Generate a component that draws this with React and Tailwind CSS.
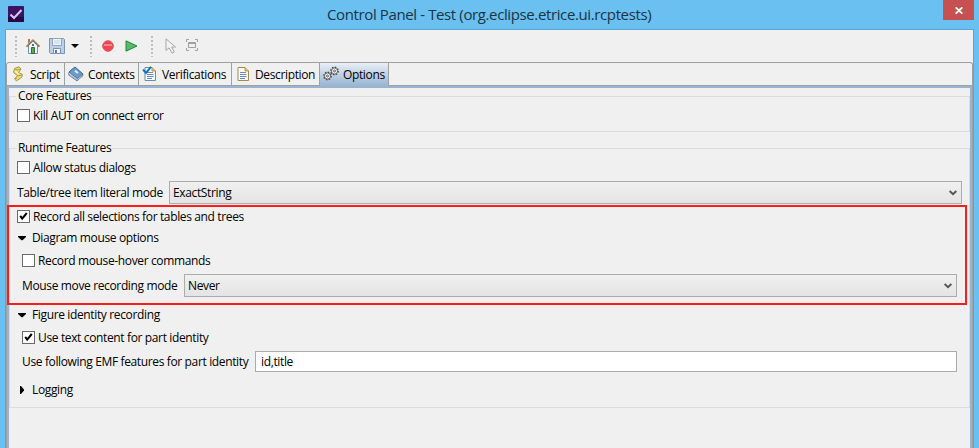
import React from "react";

const Label = ({ w, className = "", children }) => (
  <span className={"flex whitespace-pre leading-4 " + w + " " + className}>{children}</span>
);

function Check({ checked }) {
  return (
    <span className="block h-[13px] w-[13px] shrink-0 border border-[#6b6b6b] bg-white">
      {checked && (
        <svg viewBox="0 0 11 11" className="block h-[11px] w-[11px]" aria-hidden="true">
          <path d="M2.2 4.8L4.2 7.6L8.8 2" fill="none" stroke="#000" strokeWidth="2" />
        </svg>
      )}
    </span>
  );
}

function Option({ checked, w, className = "", children }) {
  return (
    <div className={"flex h-[13px] items-center gap-[3px] " + className}>
      <Check checked={checked} />
      <Label w={w}>{children}</Label>
    </div>
  );
}

function Twisty({ open }) {
  return (
    <svg viewBox="0 0 10 10" className="block h-[10px] w-[10px] shrink-0" aria-hidden="true">
      <path d={open ? "M1 3H9V4L5.5 7.2H4.5L1 4Z" : "M3 1H4L7 4.5V5.5L4 9H3Z"} fill="#000" />
    </svg>
  );
}

function Section({ open, w, className = "", children }) {
  return (
    <div className={"flex h-4 items-center gap-[5px] pl-[7px] " + className}>
      <Twisty open={open} />
      <Label w={w}>{children}</Label>
    </div>
  );
}

function Combo({ children, w }) {
  return (
    <div className="flex h-[23px] flex-1 items-center justify-between border border-[#acacac] bg-linear-to-b from-[#f0f0f0] to-[#e4e4e4] pr-1 pl-[3px]">
      <Label w={w}>{children}</Label>
      <svg viewBox="0 0 8 6" className="h-[6px] w-2" aria-hidden="true">
        <path d="M0.6 1L4 4.2L7.4 1" fill="none" stroke="#555" strokeWidth="2" />
      </svg>
    </div>
  );
}

function Group({ title, titleW, className = "", children }) {
  return (
    <fieldset className={"mr-0 min-w-0 border border-[#dcdcdc] " + className}>
      <legend className="ml-[6px] h-4 px-[2px]">
        <Label w={titleW}>{title}</Label>
      </legend>
      {children}
    </fieldset>
  );
}

const Grip = () => (
  <svg viewBox="0 0 2 21" className="h-[21px] w-[2px]" aria-hidden="true">
    <path d="M1 0V21" stroke="#bdbdbd" strokeWidth="2" strokeDasharray="2 2" />
  </svg>
);

const Home = () => (
  <svg viewBox="0 0 16 16" className="block h-4 w-4">
    <path d="M3.5 7V15.5H12.5V7L8 2.5Z" fill="#eef5fa" stroke="#6d93b8" />
    <path d="M4 1V6" stroke="#a87b58" strokeWidth="2" />
    <path d="M1.5 8.7L8 2.2L14.5 8.7" fill="none" stroke="#8b6d4a" strokeWidth="1.8" />
    <path d="M1.3 8L8 1.4L14.7 8" fill="none" stroke="#ecd9b4" strokeWidth=".8" strokeDasharray="1.3 .8" />
    <path d="M7 6H9V8H7Z" fill="#3e75a8" />
    <path d="M6.5 9.5H9.5V15.5H6.5Z" fill="#67a84d" stroke="#2d6c48" />
  </svg>
);

const Save = () => (
  <svg viewBox="0 0 16 16" className="block h-4 w-4">
    <path d="M.5 .5H14.5L15.5 1.5V15.5H1.5L.5 14.5Z" fill="#bccfe3" stroke="#7b94b6" />
    <path d="M3.5 .5H12.5V7.5H3.5Z" fill="#edf5fb" stroke="#8ba6c4" />
    <path d="M5 3H11M5 5H11" stroke="#c3d3e2" />
    <path d="M4.5 10.5H11.5V15.5H4.5Z" fill="#f6fafc" stroke="#7b94b6" />
    <path d="M6 12H8V15H6Z" fill="#5c7ea8" />
  </svg>
);

const Script = () => (
  <svg viewBox="0 0 16 16" className="block h-4 w-4">
    <path d="M3.5 2.5L8 .8L10 3L7.5 6.5L11.5 8.5L10.5 11.5L5.5 14.8L3.5 13L6.5 9.5L2.5 6.5Z" fill="#f1de72" stroke="#a8934a" />
    <path d="M4 3L6 4L9.5 3M6.5 10L11 9M4 13L6 12" fill="none" stroke="#b59a43" />
    <path d="M4.5 5.5L8 8" stroke="#fffbd0" />
  </svg>
);

const Book = () => (
  <svg viewBox="0 0 16 16" className="block h-4 w-4">
    <path d="M1 6L7 1L15.3 9L9 15L.7 9Z" fill="#f4f7fa" stroke="#6482a2" />
    <path d="M1 6L7 1L15 8L9.3 12.5Z" fill="#6c9bcc" stroke="#40709f" />
    <path d="M1 8L9 14L15 10M2 7L9 13" fill="none" stroke="#8199af" strokeWidth=".8" />
    <path d="M7 4.8L10 7" stroke="#e4f0fb" strokeWidth="2" />
  </svg>
);

const Lines = ({ check }) => (
  <svg viewBox="0 0 16 16" className="block h-4 w-4">
    <path d="M3 1.5H10L13.5 5V14.5H3Z" fill="#fafdff" stroke={check ? "#7289a5" : "#a58b46"} />
    <path d="M10 1.5V5H13.5" fill="#e8c06a" stroke="#bf9243" />
    <path d="M5 6.5H11M5 8.5H11.5M5 10.5H11.5M5 12.5H10" stroke="#6b8ac4" />
    {check && <path d="M1 3.5L4 7L9 .8" fill="none" stroke="#1477c5" strokeWidth="2" />}
  </svg>
);

const Gears = () => (
  <svg viewBox="0 0 16 16" className="block h-4 w-4">
    {[[4.5, 10], [11.5, 5]].map(([x, y]) => (
      <g key={x} fill="none" stroke="#4c4c4c">
        <circle cx={x} cy={y} r="3.6" strokeWidth="1.6" strokeDasharray="1.5 1.3" />
        <circle cx={x} cy={y} r="3" fill="#fafafa" strokeWidth=".8" />
        <circle cx={x} cy={y} r="1" fill="#fff" strokeWidth=".9" />
      </g>
    ))}
  </svg>
);

const tabs = [
  ["Script", "w-[58px]", "w-[30px]", <Script key="i" />, "pl-[4px] gap-[3px]"],
  ["Contexts", "w-[74px]", "w-[46px]", <Book key="i" />, "pl-[3px] gap-[4px]"],
  ["Verifications", "w-[93px]", "w-[66px]", <Lines key="i" check />, "pl-[3px] gap-[4px]"],
  ["Description", "w-[88px]", "w-[60px]", <Lines key="i" />, "pl-[3px] gap-[4px]"],
  ["Options", "w-[69px]", "w-[42px]", <Gears key="i" />, "pl-[3px] gap-[4px]"],
];

export default function App() {
  return (
    <div className="relative flex h-[448px] w-[979px] flex-col overflow-hidden bg-[#69c0f1] font-['Open_Sans','Noto_Sans',sans-serif] text-[12px] tracking-[-0.36px] text-black">
      <header className="flex h-[29px] shrink-0 items-start">
        <svg viewBox="0 0 16 16" className="mt-[6px] ml-2 h-4 w-4">
          <rect width="16" height="16" rx="1" fill="#3c1263" />
          <path d="M0 11H16V16H0Z" fill="#260a43" />
          <path d="M2.5 8.5L6 12L13.5 4" fill="none" stroke="#d9c4f4" strokeWidth="2" />
        </svg>
        <h1 className="ml-[303px] flex-1 pt-[4px] text-[15px] leading-5 tracking-[-0.38px] whitespace-pre text-[#1c3442]">
          Control Panel - Test (org.eclipse.etrice.ui.rcptests)
        </h1>
        <button className="mr-[5px] flex h-5 w-[31px] items-center justify-center bg-[#c75050]" aria-label="Close">
          <svg viewBox="0 0 8 7" className="mt-px h-[7px] w-2">
            <path d="M.7 .3L7.3 6.7M7.3 .3L.7 6.7" stroke="#fff" strokeWidth="1.8" />
          </svg>
        </button>
      </header>
      <main className="mx-[5px] flex flex-1 flex-col border-x border-t border-[#5ba5d0] bg-[#f0f0f0]">
        <div className="flex h-8 shrink-0 items-center pl-[9px]">
          <Grip />
          <div className="ml-[8px]"><Home /></div>
          <div className="ml-2"><Save /></div>
          <svg viewBox="0 0 8 4" className="ml-[6px] h-1 w-2"><path d="M0 0H8L4 4Z" /></svg>
          <div className="ml-[11px]"><Grip /></div>
          <svg viewBox="0 0 12 12" className="ml-[10px] h-3 w-3">
            <circle cx="6" cy="6" r="5.3" fill="#ef4651" stroke="#d85660" />
            <path d="M2 5H10" stroke="#f9858a" strokeWidth="2" />
          </svg>
          <svg viewBox="0 0 13 12" className="ml-[11px] h-3 w-[13px]">
            <path d="M1 .8V11.2L12 6Z" fill="#59b96a" stroke="#21853a" />
          </svg>
          <div className="ml-[13px]"><Grip /></div>
          <svg viewBox="0 0 12 16" className="ml-[12px] h-4 w-3">
            <path d="M1 .8V12.5L4 9.8L7 15.2L9.3 14L6.6 9H10.5Z" fill="#f3f3f3" stroke="#a5a5a5" />
          </svg>
          <svg viewBox="0 0 12 12" className="mb-[2px] ml-[9px] h-3 w-3" fill="none" stroke="#a0a0a0">
            <path d="M.5 3V.5H3M9 .5H11.5V3M11.5 9V11.5H9M3 11.5H.5V9M2.5 3.5H9.5V8.5H2.5ZM2.5 4.5H9.5" />
          </svg>
        </div>
        <div className="flex flex-1 flex-col rounded-t-[3px] border-x border-t border-[#a0a0a0]">
          <nav className="flex h-[23px] shrink-0 border-b border-[#a0a0a0]">
            {tabs.map(([name, width, w, icon, pad]) => (
              <div
                key={name}
                className={
                  "flex items-center border-r border-[#a0a0a0] " + width + " " + pad +
                  (name === "Options" ? " h-[23px] bg-linear-to-b from-[#e9eff6] to-[#99b4d1] pb-px" : " h-[22px]")
                }
              >
                <span className="block shrink-0">{icon}</span>
                <Label w={w} className="pt-px">{name}</Label>
              </div>
            ))}
          </nav>
          <div className="flex-1 border-x-2 border-t-2 border-[#99b4d1]">
            <Group title="Core Features" titleW="w-[72px]" className="h-[44px]">
              <Option w="w-[133px]" className="mt-[5px] ml-[7px]">Kill AUT on connect error</Option>
            </Group>
            <Group title="Runtime Features" titleW="w-[92px]" className="mt-2 h-[268px]">
              <Option w="w-[105px]" className="mt-[5px] ml-[7px]">Allow status dialogs</Option>
              <div className="mt-[7px] mr-[7px] ml-[7px] flex items-center">
                <Label w="w-[152px]">Table/tree item literal mode</Label>
                <Combo w="w-[57px]">ExactString</Combo>
              </div>
              <Option checked w="w-[210px]" className="mt-[6px] ml-[7px]">
                Record all selections for tables and trees
              </Option>
              <Section open w="w-[127px]" className="mt-[7px]">Diagram mouse options</Section>
              <Option w="w-[174px]" className="mt-[8px] ml-[12px]">Record mouse-hover commands</Option>
              <div className="mt-[7px] mr-[12px] ml-[12px] flex items-center">
                <Label w="w-[162px]">Mouse move recording mode</Label>
                <Combo w="w-[31px]">Never</Combo>
              </div>
              <Section open w="w-[130px]" className="mt-[10px]">Figure identity recording</Section>
              <Option checked w="w-[170px]" className="mt-[8px] ml-[12px]">Use text content for part identity</Option>
              <div className="mt-[7px] mr-[12px] ml-[12px] flex items-center">
                <Label w="w-[233px]">Use following EMF features for part identity</Label>
                <div className="flex h-[21px] flex-1 items-center border border-[#ababab] bg-white pl-[5px]">
                  <Label w="w-[34px]">id,title</Label>
                </div>
              </div>
              <Section w="w-[44px]" className="mt-[10px]">Logging</Section>
            </Group>
          </div>
        </div>
      </main>
      <div className="pointer-events-none absolute top-[205px] left-[7px] h-[100px] w-[960px] border-2 border-[#fb1c1c]" />
    </div>
  );
}
